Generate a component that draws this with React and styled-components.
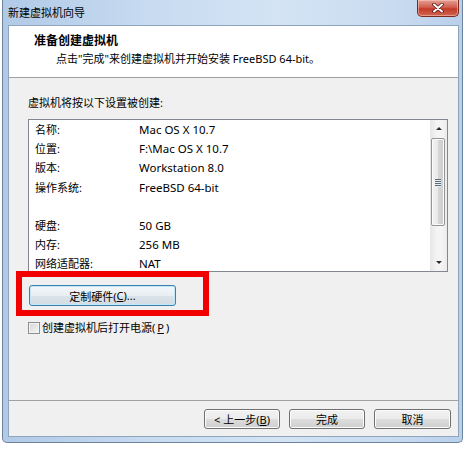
import React from "react";
import styled, { createGlobalStyle } from "styled-components";

const GlobalStyle = createGlobalStyle`
  html, body {
    margin: 0;
    padding: 0;
    background: #fff;
  }
  body {
    font-family: "Noto Sans", "Noto Sans CJK SC", sans-serif;
    font-size: 11px;
    color: #000;
  }
`;

const settings = [
  { label: "名称:", value: "Mac OS X 10.7" },
  { label: "位置:", value: "F:\\Mac OS X 10.7" },
  { label: "版本:", value: "Workstation 8.0" },
  { label: "操作系统:", value: "FreeBSD 64-bit" },
  { label: "", value: "" },
  { label: "硬盘:", value: "50 GB" },
  { label: "内存:", value: "256 MB" },
  { label: "网络适配器:", value: "NAT" },
];

const App = () => {
  return (
    <Page>
      <GlobalStyle />
      <Window>
        <TitleBar>
          <Caption>新建虚拟机向导</Caption>
          <CloseButton>
            <svg width="12" height="10" viewBox="0 0 12 10">
              <path
                d="M2 1.5 L10 8.5 M10 1.5 L2 8.5"
                stroke="#5a1a14"
                strokeWidth="3.6"
                strokeLinecap="round"
              />
              <path
                d="M2 1.5 L10 8.5 M10 1.5 L2 8.5"
                stroke="#fff"
                strokeWidth="2"
                strokeLinecap="round"
              />
            </svg>
          </CloseButton>
        </TitleBar>
        <Client>
          <Header>
            <HeaderTitle>准备创建虚拟机</HeaderTitle>
            <HeaderSub>点击"完成"来创建虚拟机并开始安装 FreeBSD 64-bit。</HeaderSub>
          </Header>
          <Body>
            <Intro>虚拟机将按以下设置被创建:</Intro>
            <ListBox>
              <Rows>
                {settings.map((s, i) => (
                  <Row key={i}>
                    <Label>{s.label}</Label>
                    <Value>{s.value}</Value>
                  </Row>
                ))}
              </Rows>
              <ScrollBar>
                <Arrow>
                  <Triangle />
                </Arrow>
                <Thumb>
                  <Grip />
                  <Grip />
                  <Grip />
                  <Grip />
                </Thumb>
                <Track />
                <Arrow>
                  <Triangle down />
                </Arrow>
              </ScrollBar>
            </ListBox>
            <CustomButton>
              定制硬件(<U>C</U>)...
            </CustomButton>
            <CheckRow>
              <CheckBox />
              创建虚拟机后打开电源(<U>P</U>)
            </CheckRow>
            <Highlight />
          </Body>
          <Footer>
            <Button>
              &lt; 上一步(<U>B</U>)
            </Button>
            <Button>完成</Button>
            <Button wide>取消</Button>
          </Footer>
        </Client>
      </Window>
    </Page>
  );
};

export default App;

const Page = styled.div`
  width: 466px;
  height: 450px;
  padding-left: 2px;
  box-sizing: border-box;
  background: #fff;
  overflow: hidden;
`;

const Window = styled.div`
  width: 461px;
  height: 443px;
  box-sizing: border-box;
  display: flex;
  flex-direction: column;
  padding: 0 3px 5px 5px;
  border: 1px solid #6d829c;
  border-top: none;
  border-radius: 0 0 5px 5px;
  background: linear-gradient(
    to right,
    #b1cae7 0%,
    #c6daf0 30%,
    #d4e4f5 60%,
    #c9dbf0 85%,
    #b9d0eb 100%
  );
`;

const TitleBar = styled.div`
  height: 25px;
  display: flex;
  justify-content: space-between;
  align-items: flex-start;
`;

const Caption = styled.div`
  line-height: 25px;
  font-size: 11px;
  color: #000;
`;

const CloseButton = styled.div`
  width: 42px;
  height: 17px;
  box-sizing: border-box;
  display: flex;
  align-items: center;
  justify-content: center;
  border: 1px solid #7a2a20;
  border-top: none;
  border-radius: 0 0 5px 5px;
  background: linear-gradient(#e3a093 0%, #d25f4f 45%, #c23b29 55%, #d2654f 100%);
  box-shadow: inset 0 0 0 1px rgba(255, 210, 200, 0.5);
`;

const Client = styled.div`
  flex: 1;
  display: flex;
  flex-direction: column;
  border: 1px solid #8fa4bd;
  background: #f0f0f0;
`;

const Header = styled.div`
  height: 52px;
  box-sizing: border-box;
  padding: 6px 0 0 25px;
  background: #fff;
  border-bottom: 1px solid #a0a0a0;
`;

const HeaderTitle = styled.div`
  font-size: 12px;
  font-weight: bold;
  line-height: 18px;
`;

const HeaderSub = styled.div`
  line-height: 18px;
  padding-left: 22px;
`;

const Body = styled.div`
  flex: 1;
  position: relative;
  padding: 17px 0 0 19px;
  display: flex;
  flex-direction: column;
  align-items: flex-start;
`;

const Intro = styled.div`
  line-height: 16px;
`;

const ListBox = styled.div`
  margin-top: 8px;
  width: 420px;
  height: 153px;
  box-sizing: border-box;
  border: 1px solid #828790;
  background: #fff;
  display: flex;
`;

const Rows = styled.div`
  flex: 1;
  overflow: hidden;
  padding-left: 6px;
`;

const Row = styled.div`
  display: flex;
  align-items: center;
  height: 19.2px;
  line-height: 19.2px;
  white-space: nowrap;
`;

const Label = styled.span`
  width: 104px;
  flex: none;
`;

const Value = styled.span`
  font-size: 11.5px;
`;

const ScrollBar = styled.div`
  width: 17px;
  display: flex;
  flex-direction: column;
  background: linear-gradient(to right, #e6e6e6, #f4f4f4 40%, #f4f4f4 70%, #ebebeb);
`;

const Arrow = styled.div`
  height: 17px;
  display: flex;
  align-items: center;
  justify-content: center;
`;

const Triangle = styled.div`
  width: 0;
  height: 0;
  border-left: 3px solid transparent;
  border-right: 3px solid transparent;
  ${(p) =>
    p.down ? "border-top: 3px solid #2c2c2c;" : "border-bottom: 3px solid #2c2c2c;"}
`;

const Thumb = styled.div`
  margin: 1px 2px 0 1px;
  height: 88px;
  box-sizing: border-box;
  border: 1px solid #959595;
  border-radius: 2px;
  background: linear-gradient(to right, #f3f3f3, #e8e8e8 50%, #d6d6d6 51%, #cdcdcd);
  box-shadow: inset 0 0 0 1px #fbfbfb;
  display: flex;
  flex-direction: column;
  align-items: center;
  justify-content: center;
  gap: 1px;
`;

const Grip = styled.div`
  width: 6px;
  height: 1px;
  background: #5e6a78;
  box-shadow: 0 1px 0 #e8eef5;
`;

const Track = styled.div`
  flex: 1;
`;

const buttonBase = `
  height: 20px;
  box-sizing: border-box;
  border-radius: 3px;
  font-family: inherit;
  font-size: 11px;
  color: #000;
  display: flex;
  align-items: center;
  justify-content: center;
  white-space: nowrap;
`;

const CustomButton = styled.div`
  ${buttonBase}
  margin: 13px 0 0 1px;
  width: 147px;
  height: 21px;
  border: 1px solid #3c7fb1;
  background: linear-gradient(#f4f7fa 0%, #e9eef2 50%, #dbe3ea 51%, #d3dce4 100%);
  box-shadow: inset 0 0 0 1px #bfe9f9;
`;

const Button = styled.div`
  ${buttonBase}
  width: ${(p) => (p.wide ? "77px" : "76px")};
  border: 1px solid #707070;
  background: linear-gradient(#f2f2f2 0%, #ebebeb 50%, #dddddd 51%, #cfcfcf 100%);
  box-shadow: inset 0 0 0 1px #fcfcfc;
`;

const U = styled.span`
  text-decoration: underline;
`;

const CheckRow = styled.div`
  margin-top: 14px;
  display: flex;
  align-items: center;
  gap: 2px;
  line-height: 16px;
`;

const CheckBox = styled.div`
  width: 12px;
  height: 12px;
  box-sizing: border-box;
  border: 1px solid #8e8f8f;
  background: linear-gradient(135deg, #d6d6d6, #f6f6f6);
  box-shadow: inset 0 0 0 1px #f4f4f4;
`;

const Highlight = styled.div`
  position: absolute;
  left: 7px;
  top: 193px;
  width: 193px;
  height: 45px;
  box-sizing: border-box;
  border: 6px solid #f20000;
`;

const Footer = styled.div`
  height: 36px;
  box-sizing: border-box;
  border-top: 1px solid #a0a0a0;
  padding: 8px 7px 0 0;
  display: flex;
  justify-content: flex-end;
  align-items: flex-start;
  gap: 9px;
`;
